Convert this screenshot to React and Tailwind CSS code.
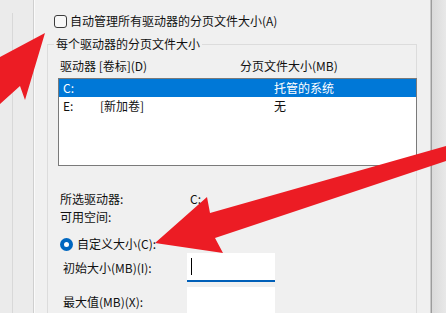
import React from 'react';

// Windows "virtual memory" dialog fragment with two red annotation arrows.
function Row({ cells, selected }) {
  return (
    <div
      className={`grid h-[18px] grid-cols-[37px_174px_1fr] items-center pl-[4px] ${
        selected ? 'bg-[#0078d7] text-white' : ''
      }`}
    >
      {cells.map((c, i) => (
        <span key={i} className="whitespace-nowrap">{c}</span>
      ))}
    </div>
  );
}

function Field({ label, focused }) {
  return (
    <div className="grid grid-cols-[129px_88px] items-center">
      <span className="pl-[5px]">{label}</span>
      <div
        className={`flex h-[29px] items-center bg-white pl-[4px] ${
          focused ? 'border-b-2 border-[#005fb8]' : ''
        }`}
      >
        {focused && <span className="block h-[17px] w-px bg-black" />}
      </div>
    </div>
  );
}

export default function App() {
  return (
    <div className="relative flex h-[313px] w-[446px] overflow-hidden bg-[#f0f0f0] font-['Noto_Sans_CJK_SC','Microsoft_YaHei',sans-serif] text-[12px] leading-[18px] text-[#111111]">
      {/* window behind, on the left */}
      <div className="flex w-[35px] shrink-0 bg-[#ebebeb]">
        <div className="w-[12px] shrink-0" />
        <div className="mt-[13px] w-px bg-[#d8d8d8]" />
        <div className="w-[20px] shrink-0" />
        <div className="w-px bg-[#cfcfcf]" />
        <div className="w-px bg-[#fafafa]" />
      </div>

      {/* dialog panel */}
      <div className="flex w-[395px] shrink-0 flex-col pt-[12px]">
        <label className="flex h-[18px] items-center gap-[3px] pl-[19px]">
          <span className="block h-[13px] w-[13px] rounded-[3px] border border-[#3c3c3c] bg-[#f8f8f8]" />
          <span className="whitespace-nowrap">自动管理所有驱动器的分页文件大小(A)</span>
        </label>

        <div className="ml-[12px] mr-[13px] mt-[14px] flex-1 border-l border-r border-t border-[#dcdcdc] pl-[10px]">
          <div className="-ml-[4px] -mt-[10px] flex h-[18px]">
            <span className="bg-[#f0f0f0] px-[2px]">每个驱动器的分页文件大小</span>
          </div>

          <div className="mt-[4px] grid h-[18px] grid-cols-[182px_1fr] items-center">
            <span className="pl-[2px]">驱动器 [卷标](D)</span>
            <span>分页文件大小(MB)</span>
          </div>

          <div className="-mr-px mt-[3px] h-[88px] border border-[#7a7a7a] bg-white">
            <Row selected cells={['C:', '', '托管的系统']} />
            <Row cells={['E:', '[新加卷]', '无']} />
          </div>

          <div className="mt-[24px] grid grid-cols-[130px_1fr] pl-[2px]">
            <span>所选驱动器:</span>
            <span>C:</span>
            <span>可用空间:</span>
            <span />
          </div>

          <div className="mt-[9px] flex h-[18px] items-center gap-[4px] pl-[2px]">
            <span className="grid h-[13px] w-[13px] place-items-center rounded-full bg-[#0067c0]">
              <span className="block h-[5px] w-[5px] rounded-full bg-white" />
            </span>
            <span>自定义大小(C):</span>
          </div>

          <Field label="初始大小(MB)(I):" focused />
          <div className="mt-[5px]">
            <Field label="最大值(MB)(X):" />
          </div>
        </div>
      </div>

      {/* panel edge and the area to the right */}
      <div className="w-px shrink-0 bg-[#c8c8c8]" />
      <div className="w-px shrink-0 bg-[#9c9c9c]" />
      <div className="flex-1 bg-gradient-to-r from-[#dadada] to-[#e8e8e8]" />

      {/* red annotation arrows */}
      <svg className="pointer-events-none absolute inset-0" width="446" height="313" viewBox="0 0 446 313">
        <polygon points="45,33 25,100 20,86 0,104 0,57" fill="#ec1c24" />
        <polygon points="155,243 207,197 210,213 446,146 446,161 215,238 223,253" fill="#ec1c24" />
      </svg>
    </div>
  );
}
